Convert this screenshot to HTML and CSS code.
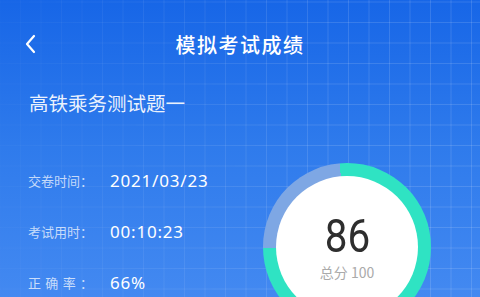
FILE: index.html
```html
<!DOCTYPE html>
<html lang="zh-CN">
<head>
    <meta charset="UTF-8">
    <meta name="viewport" content="width=device-width, initial-scale=1.0">
    <title>模拟考试成绩</title>
    <link rel="stylesheet" href="styles.css">
</head>
<body>
    <div class="page">
        <div class="header">
            <div class="back">
                <svg width="14" height="20" viewBox="0 0 14 20">
                    <path d="M10 2 L3 10 L10 18" fill="none" stroke="#fff" stroke-width="2.2" stroke-linecap="round" stroke-linejoin="round"/>
                </svg>
            </div>
            <div class="title">模拟考试成绩</div>
        </div>

        <div class="exam-name">高铁乘务测试题一</div>

        <div class="result">
            <div class="info">
                <div class="row">
                    <span class="label">交卷时间：</span>
                    <span class="value">2021/03/23</span>
                </div>
                <div class="row">
                    <span class="label">考试用时：</span>
                    <span class="value">00:10:23</span>
                </div>
                <div class="row">
                    <span class="label">正确率：</span>
                    <span class="value">66%</span>
                </div>
            </div>

            <div class="ring">
                <div class="ring-inner">
                    <div class="score">86</div>
                    <div class="total">总分 100</div>
                </div>
            </div>
        </div>
    </div>
</body>
</html>
```

FILE: styles.css
```css
body {
    margin: 0;
    width: 480px;
    height: 297px;
    overflow: hidden;
    font-family: "Noto Sans CJK SC", "Noto Sans", sans-serif;
}

.page {
    position: relative;
    height: 297px;
    background: linear-gradient(180deg, #1766e7 0%, #2f7bec 50%, #4389f1 100%);
    color: #fff;
}

/* faint grid, fading out toward the left */
.page::before {
    content: "";
    position: absolute;
    inset: 0;
    background-image:
        linear-gradient(90deg, rgba(255,255,255,0.13) 1px, transparent 1px),
        linear-gradient(180deg, rgba(255,255,255,0.13) 1px, transparent 1px);
    background-size: 20.5px 20.5px;
    background-position: 20px 1.5px;
    -webkit-mask-image: linear-gradient(90deg, rgba(0,0,0,0.15) 0%, rgba(0,0,0,0.6) 40%, #000 70%);
    mask-image: linear-gradient(90deg, rgba(0,0,0,0.15) 0%, rgba(0,0,0,0.6) 40%, #000 70%);
    pointer-events: none;
}

.header {
    position: relative;
    display: flex;
    align-items: center;
    justify-content: center;
    height: 44px;
    padding-top: 22px;
}

.back {
    position: absolute;
    left: 24px;
    top: 34px;
    width: 14px;
    height: 20px;
}

.title {
    font-size: 20px;
    font-weight: 500;
    letter-spacing: 1.5px;
}

.exam-name {
    position: relative;
    margin-top: 22px;
    padding-left: 29px;
    font-size: 19.5px;
    line-height: 30px;
    color: rgba(255,255,255,0.92);
}

.result {
    position: relative;
    display: flex;
    justify-content: space-between;
    padding-top: 37px;
}

.info {
    padding-left: 28px;
}

.row {
    display: flex;
    align-items: center;
    height: 51px;
}

.label {
    width: 65px;
    font-size: 13px;
    color: rgba(255,255,255,0.72);
    text-align: justify;
    text-align-last: justify;
}

.value {
    margin-left: 17px;
    font-family: "Noto Sans", sans-serif;
    font-size: 17px;
    letter-spacing: 0.8px;
}

.ring {
    display: flex;
    align-items: center;
    justify-content: center;
    width: 168px;
    height: 168px;
    margin-top: 8px;
    margin-right: 49px;
    border-radius: 50%;
    background: conic-gradient(from -5deg, #2fe3c3 0deg, #2fe3c3 274deg, #7ea7e4 274deg, #7ea7e4 360deg);
}

.ring-inner {
    display: flex;
    flex-direction: column;
    align-items: center;
    justify-content: center;
    width: 142px;
    height: 142px;
    border-radius: 50%;
    background: #fff;
}

.score {
    font-family: "Roboto", sans-serif;
    font-size: 47px;
    line-height: 40px;
    color: #2e2e2e;
    margin-top: 2px;
    transform: scaleX(0.86);
}

.total {
    margin-top: 8px;
    font-size: 14px;
    line-height: 16px;
    color: #aaa;
}
```
